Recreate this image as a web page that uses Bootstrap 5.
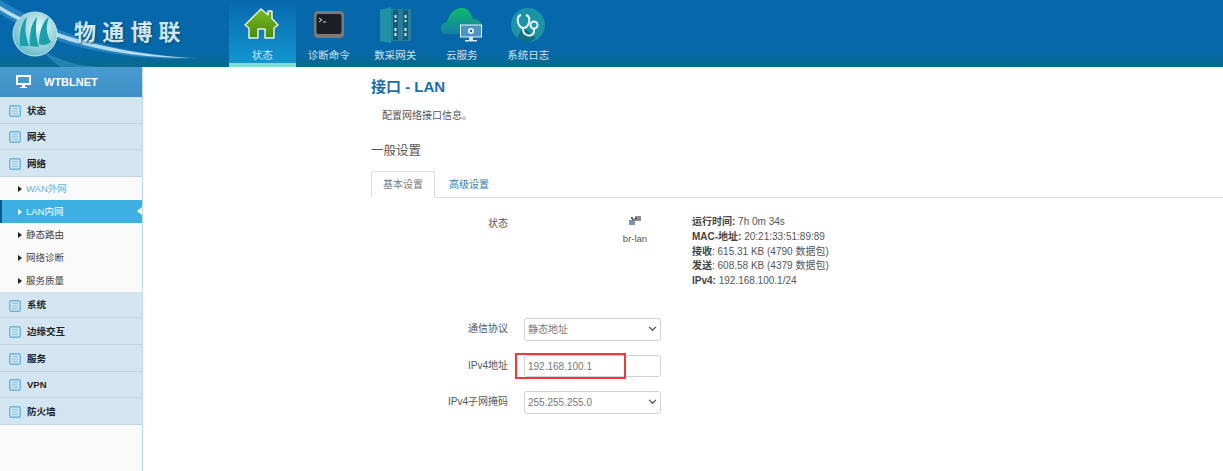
<!doctype html>
<html lang="zh">
<head>
<meta charset="utf-8">
<title>接口 - LAN</title>
<link href="https://cdn.jsdelivr.net/npm/bootstrap@5.3.0/dist/css/bootstrap.min.css" rel="stylesheet">
<style>
html, body { height: 471px; overflow: hidden; }
body { font-family: "Liberation Sans", "Noto Sans CJK SC", sans-serif; font-size: 10px; color: #555; background: #fff; }
.topbar { height: 67px; background: linear-gradient(#0668ad, #0668a8 78%, #076a8a); }
.logo-box { width: 229px; height: 67px; position: relative; overflow: hidden; }
.logo-box svg { position: absolute; left: 0; top: 0; }
.logo-text { position: absolute; left: 74px; top: 19px; font-size: 22px; line-height: 28px; font-weight: 700; letter-spacing: 6.2px; color: #cfe6ee; text-shadow: 1px 1px 2px #04466f; white-space: nowrap; }
.top-item { width: 66.5px; height: 67px; color: #cfe3ee; font-size: 10.500px; line-height: 14px; text-align: center; padding-top: 7px; }
.top-item svg { display: block; margin: 0 auto; height: 36px; }
.top-item span { display: block; margin-top: 5px; }
.top-on { background: linear-gradient(#0868ad, #1296cf); border-bottom: 4px solid #7fdcd0; }
.sidebar { width: 143px; height: 404px; flex: none; background: #f9f9f9; border-right: 1px solid #bcdcec; }
.side-head { height: 30px; background: linear-gradient(#4a9bd0, #3f90c6); color: #fff; font-weight: 700; font-size: 11px; line-height: 30px; padding-left: 16px; gap: 13px; }
.side-group { height: 26.6px; background: #d3e5f0; border-bottom: 1px solid #bfd5e2; color: #222; font-size: 9.500px; font-weight: 700; padding: 2px 0 0 9px; gap: 6px; }
.side-ico { width: 12px; height: 12px; flex: none; }
.side-sub { height: 23px; line-height: 23px; padding: 1px 0 0 18px; color: #444; font-size: 9.500px; position: relative; gap: 4px; }
.side-sub i { width: 0; height: 0; border-left: 4px solid #222; border-top: 3px solid transparent; border-bottom: 3px solid transparent; }
.sub-link { color: #62b3cc; }
.sub-on { background: #3db0e3; color: #fff; border-left: 2px solid #075c8e; padding-left: 16px; }
.sub-on i { border-left-color: #fff; }
.sub-on::after { content: ""; position: absolute; right: 0; top: 7px; border-right: 5px solid #fff; border-top: 4px solid transparent; border-bottom: 4px solid transparent; }
.page-main { padding: 10px 0 0 228px; flex: 1; min-width: 0; }
.page-title { font-size: 15px; line-height: 20px; font-weight: 700; color: #1a6ea8; margin: 0; }
.page-desc { margin: 12px 0 0 11px; font-size: 10px; line-height: 14px; color: #555; }
.sect-title { margin: 19px 0 0; font-size: 12.500px; line-height: 18px; font-weight: 400; color: #555; }
.tab-line { margin-top: 11px; height: 27px; border-bottom: 1px solid #ddd; }
.tab-a, .tab-b { font-size: 10px; line-height: 26px; padding: 0 11px; height: 27px; }
.tab-a { color: #777; background: #fff; border: 1px solid #ddd; border-bottom-color: #fff; border-radius: 3px 3px 0 0; }
.tab-b { color: #2a7fb5; padding: 1px 13px 0 14px; }
.status-row { padding-top: 17px; height: 120px; }
.field-label { width: 137px; flex: none; text-align: right; font-size: 10px; color: #555; }
.status-row .field-label { padding-top: 1px; }
.dev-box { width: 54px; margin-left: 100px; flex: none; text-align: center; font-size: 9.500px; line-height: 14px; }
.dev-box svg { display: block; margin: 0 auto 6px; }
.dev-info { margin-left: 30px; font-size: 10px; line-height: 14.8px; white-space: nowrap; }
.dev-info b { color: #444; }
.form-line { height: 22px; margin-bottom: 14.500px; }
.form-line .field-label { line-height: 21px; }
.fake-ctl { margin-left: 16px; width: 137px; height: 22.500px; border: 1px solid #d2d2d2; border-radius: 3px; font-size: 10px; line-height: 21px; padding: 0 3px; color: #777; background: #fff; position: relative; }
.chev { position: absolute; right: 3px; top: 7px; }
.red-box { position: absolute; left: -10px; top: -3px; width: 111px; height: 26px; border: 2px solid #ea3a3a; }
</style>
</head>
<body>
<svg width="0" height="0" class="d-block position-absolute">
    <symbol id="listico" viewBox="0 0 12 12"><rect x=".7" y=".7" width="10.600" height="10.600" rx="1.500" fill="#cfe5f1" stroke="#6db5d8" stroke-width="1.400"/><path d="M3 3.500H9M3 6H9M3 8.500H9" stroke="#8fc3dd"/></symbol>
</svg>
<div class="topbar d-flex">
    <div class="logo-box">
        <svg width="229" height="67" viewBox="0 0 229 67">
            <defs>
                <radialGradient id="ball" cx="0.6" cy="0.35" r="0.65"><stop offset="0" stop-color="#e2f6f6"/><stop offset="1" stop-color="#6fbdcd"/></radialGradient>
            </defs>
            <path d="M0 0C50 30 110 55 200 58C120 62 50 45 0 14Z" fill="#3f9bcd" opacity=".55"/>
            <path d="M0 6C40 30 100 52 190 58C110 58 45 38 0 10Z" fill="#d8f0f8" opacity=".8"/>
            <path d="M35 46C60 62 80 66 100 67L60 67Z" fill="#3f9bcd" opacity=".5"/>
            <circle cx="35" cy="34" r="22" fill="url(#ball)" stroke="#bfe6ea"/>
            <path d="M20 46C19 32 22 21 27 17C24 28 26 38 29 46ZM30 46C29 32 32 22 37 17C35 28 36 38 39 47ZM39 44C39 32 43 20 49 17C45 28 47 36 51 42C47 45 43 46 39 44Z" fill="#1c9fa8"/>
        </svg>
        <div class="logo-text">物通博联</div>
    </div>
    <div class="top-item top-on">
        <svg viewBox="0 0 36 36" width="36" height="36"><defs><linearGradient id="homeg" x1="0" y1="0" x2="0" y2="1"><stop offset="0" stop-color="#78b823"/><stop offset="1" stop-color="#4a8c0e"/></linearGradient></defs><path d="M17 2L24 8V4H28V11.500L34 18L30 21V31H21V22H14V31H5V21L1 18Z" fill="url(#homeg)" stroke="#e8efe0" stroke-width="1.500" stroke-linejoin="round"/></svg>
        <span>状态</span>
    </div>
    <div class="top-item">
        <svg viewBox="0 0 36 36" width="36" height="36"><rect x="3" y="4" width="30" height="27" rx="4" fill="#77797b"/><rect x="5.500" y="7" width="25" height="20" rx="2" fill="#1d1f22"/><path d="M8 11L11 13L8 15M12 15H15" stroke="#ddd" stroke-width="1" fill="none"/></svg>
        <span>诊断命令</span>
    </div>
    <div class="top-item">
        <svg viewBox="0 0 36 36" width="36" height="36"><rect x="3" y="2" width="31" height="32" fill="#2a7d96"/><path d="M3 3L14 0V36L3 34Z" fill="#1f92a8"/><rect x="16" y="3" width="5" height="30" fill="#135e7e"/><rect x="26" y="3" width="5" height="30" fill="#135e7e"/><path d="M18.500 8V15M18.500 21V29M28.500 8V15M28.500 21V29" stroke="#d8e8e8" stroke-width="2" stroke-dasharray="3 2"/></svg>
        <span>数采网关</span>
    </div>
    <div class="top-item">
        <svg viewBox="0 0 46 36" width="46" height="36"><defs><linearGradient id="cloudg" x1="0" y1="0" x2="0" y2="1"><stop offset="0" stop-color="#10bb68"/><stop offset="1" stop-color="#137fa8"/></linearGradient></defs><path d="M8 27C0 27 0 16 8 15C10 7 16 0 24 1C30 2 33 8 34 12C43 12 47 22 41 27Z" fill="url(#cloudg)"/><rect x="21.500" y="18" width="21" height="12" fill="#4f94c0" stroke="#e8f2f7"/><rect x="30" y="30" width="4" height="3" fill="#d5e8f2"/><rect x="26" y="33" width="12" height="1.500" fill="#d5e8f2"/><circle cx="32" cy="24" r="3" fill="#e8f2f7"/><circle cx="32" cy="24" r="1.200" fill="#17608f"/></svg>
        <span>云服务</span>
    </div>
    <div class="top-item">
        <svg viewBox="0 0 36 36" width="36" height="36"><circle cx="18" cy="18" r="17" fill="#1c93a6"/><path d="M18 35A17 17 0 0 1 7 31L13 20L26 31A17 17 0 0 1 18 35Z" fill="#126d85"/><path d="M11 8C7 9 7 14 9 18C11 22 16 22 18 18C20 14 20 9 16 8M13 22C13 29 22 31 24 25V21" fill="none" stroke="#e9f3f5" stroke-width="2"/><circle cx="24" cy="18" r="3.500" fill="none" stroke="#e9f3f5" stroke-width="2"/></svg>
        <span>系统日志</span>
    </div>
</div>

<div class="d-flex">
    <div class="sidebar">
        <div class="side-head d-flex align-items-center">
            <svg width="15" height="14" viewBox="0 0 15 14"><path d="M0 0H15V10H9V12H11V13H4V12H6V10H0ZM2 2V8H13V2Z" fill="#fff" fill-rule="evenodd"/></svg>
            <span>WTBLNET</span>
        </div>
        <div class="side-group d-flex align-items-center"><svg class="side-ico" viewBox="0 0 12 12"><use href="#listico"/></svg>状态</div>
        <div class="side-group d-flex align-items-center"><svg class="side-ico" viewBox="0 0 12 12"><use href="#listico"/></svg>网关</div>
        <div class="side-group d-flex align-items-center"><svg class="side-ico" viewBox="0 0 12 12"><use href="#listico"/></svg>网络</div>
        <div class="side-sub sub-link d-flex align-items-center"><i></i>WAN外网</div>
        <div class="side-sub sub-on d-flex align-items-center"><i></i>LAN内网</div>
        <div class="side-sub d-flex align-items-center"><i></i>静态路由</div>
        <div class="side-sub d-flex align-items-center"><i></i>网络诊断</div>
        <div class="side-sub d-flex align-items-center"><i></i>服务质量</div>
        <div class="side-group d-flex align-items-center"><svg class="side-ico" viewBox="0 0 12 12"><use href="#listico"/></svg>系统</div>
        <div class="side-group d-flex align-items-center"><svg class="side-ico" viewBox="0 0 12 12"><use href="#listico"/></svg>边缘交互</div>
        <div class="side-group d-flex align-items-center"><svg class="side-ico" viewBox="0 0 12 12"><use href="#listico"/></svg>服务</div>
        <div class="side-group d-flex align-items-center"><svg class="side-ico" viewBox="0 0 12 12"><use href="#listico"/></svg>VPN</div>
        <div class="side-group d-flex align-items-center"><svg class="side-ico" viewBox="0 0 12 12"><use href="#listico"/></svg>防火墙</div>
    </div>

    <div class="page-main">
        <h2 class="page-title">接口 - LAN</h2>
        <p class="page-desc">配置网络接口信息。</p>
        <h3 class="sect-title">一般设置</h3>
        <div class="tab-line d-flex">
            <div class="tab-a">基本设置</div>
            <div class="tab-b">高级设置</div>
        </div>
        <div class="status-row d-flex">
            <div class="field-label">状态</div>
            <div class="dev-box">
                <svg width="12" height="11" viewBox="0 0 12 11"><rect x="0" y="5" width="6" height="5" fill="#7d94b0"/><rect x="6" y="1" width="6" height="5" fill="#8a8f98"/><path d="M3 5L8 3" stroke="#333"/><rect x="2" y="2" width="2" height="2" fill="#555"/></svg>
                br-lan
            </div>
            <div class="dev-info">
                <b>运行时间:</b> 7h 0m 34s<br>
                <b>MAC-地址:</b> 20:21:33:51:89:89<br>
                <b>接收</b>: 615.31 KB (4790 数据包)<br>
                <b>发送</b>: 608.58 KB (4379 数据包)<br>
                <b>IPv4:</b> 192.168.100.1/24
            </div>
        </div>
        <div class="form-line d-flex">
            <div class="field-label">通信协议</div>
            <div class="fake-ctl">静态地址<svg class="chev" width="9" height="6" viewBox="0 0 10 7"><path d="M1 1L5 5L9 1" fill="none" stroke="#555" stroke-width="1.500"/></svg></div>
        </div>
        <div class="form-line d-flex">
            <div class="field-label">IPv4地址</div>
            <div class="fake-ctl">192.168.100.1<div class="red-box"></div></div>
        </div>
        <div class="form-line d-flex">
            <div class="field-label">IPv4子网掩码</div>
            <div class="fake-ctl">255.255.255.0<svg class="chev" width="9" height="6" viewBox="0 0 10 7"><path d="M1 1L5 5L9 1" fill="none" stroke="#555" stroke-width="1.500"/></svg></div>
        </div>
    </div>
</div>

<script src="https://cdn.jsdelivr.net/npm/bootstrap@5.3.0/dist/js/bootstrap.bundle.min.js"></script>
</body>
</html>
